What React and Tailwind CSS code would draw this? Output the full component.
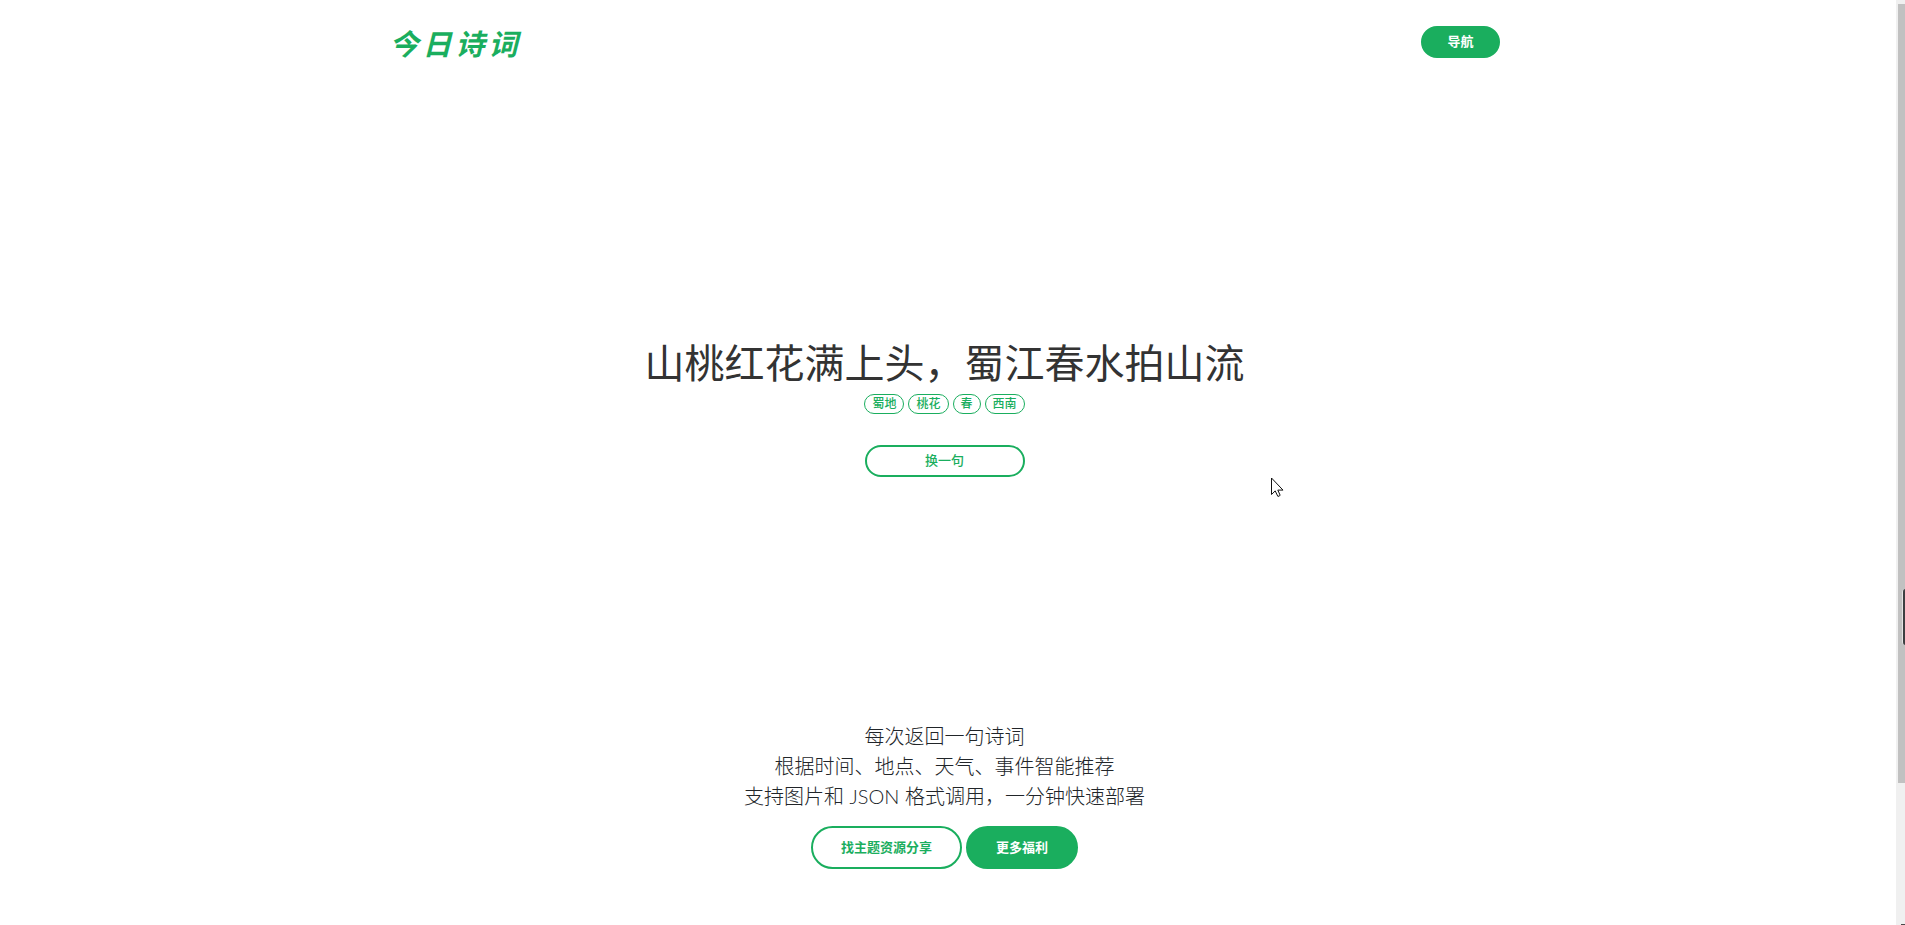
const tags = ["蜀地", "桃花", "春", "西南"];
const brand = ["今", "日", "诗", "词"];

const pill =
  "flex items-center justify-center rounded-full border-2 border-[#1aae5e] pb-0.5 text-[13px] leading-5 cursor-pointer";

function Scrollbar() {
  return (
    <div aria-hidden="true" className="fixed inset-y-0 right-0 w-[9px] bg-[#f0f0f0]">
      <div className="absolute right-0 top-1 h-[779px] w-[7px] bg-[#c1c1c1]" />
      <div className="absolute right-0 top-[589px] h-14 w-[3px] rounded-l-sm border-l border-[#e4e4e4] bg-[#3c3f41]" />
      <div className="absolute bottom-0 right-0 h-px w-1 bg-[#4a4a4a]" />
    </div>
  );
}

function Pointer() {
  return (
    <svg
      aria-hidden="true"
      className="absolute left-[1271px] top-[477px]"
      width="13"
      height="21"
      viewBox="0 0 13 21"
    >
      <path
        d="M0.5 1v16.5l3.7-3.6 2.6 5.4q1.8.3 2.3-1.2l-2.3-5h5.2z"
        fill="#fff"
        stroke="#111"
        strokeWidth="1"
      />
    </svg>
  );
}

export default function App() {
  return (
    <div className="relative flex min-h-screen flex-col bg-white pr-4 font-['Open_Sans','Noto_Sans_CJK_SC',sans-serif] text-[#212529]">
      <header className="mx-auto flex w-full max-w-[1110px] items-start justify-between pt-[26px]">
        <a
          href="#"
          aria-label="今日诗词"
          className="flex gap-1 text-[29px] leading-9 font-bold text-[#1aae5e] italic"
        >
          {brand.map((char) => (
            <span key={char}>{char}</span>
          ))}
        </a>
        <button type="button" className={`${pill} h-8 bg-[#1aae5e] px-6 font-bold text-white`}>
          导航
        </button>
      </header>

      <main className="flex flex-1 flex-col items-center">
        <section className="mt-[271px] flex flex-col items-center">
          <h1 className="text-[40px] leading-[60px] text-[#333]">山桃红花满上头，蜀江春水拍山流</h1>
          <ul className="mt-px flex gap-1">
            {tags.map((tag) => (
              <li
                key={tag}
                className="flex h-5 items-center rounded-full border border-[#1aae5e] px-[7px] text-[12px] leading-4 font-medium text-[#1aae5e]"
              >
                {tag}
              </li>
            ))}
          </ul>
          <button
            type="button"
            className={`${pill} mt-[31px] h-8 w-40 bg-white font-medium text-[#1aae5e]`}
          >
            换一句
          </button>
        </section>

        <section className="mt-[244px] flex flex-col items-center">
          <p className="text-center font-['Lato','Noto_Sans_CJK_SC',sans-serif] text-[20px] leading-[30px] font-light">
            每次返回一句诗词
            <br />
            根据时间、地点、天气、事件智能推荐
            <br />
            支持图片和 JSON 格式调用，一分钟快速部署
          </p>
          <div className="mt-[15px] flex gap-1">
            <a href="#" className={`${pill} h-[43px] bg-white px-7 font-bold text-[#1aae5e]`}>
              找主题资源分享
            </a>
            <a href="#" className={`${pill} h-[43px] bg-[#1aae5e] px-7 font-bold text-white`}>
              更多福利
            </a>
          </div>
        </section>
      </main>

      <Pointer />
      <Scrollbar />
    </div>
  );
}
